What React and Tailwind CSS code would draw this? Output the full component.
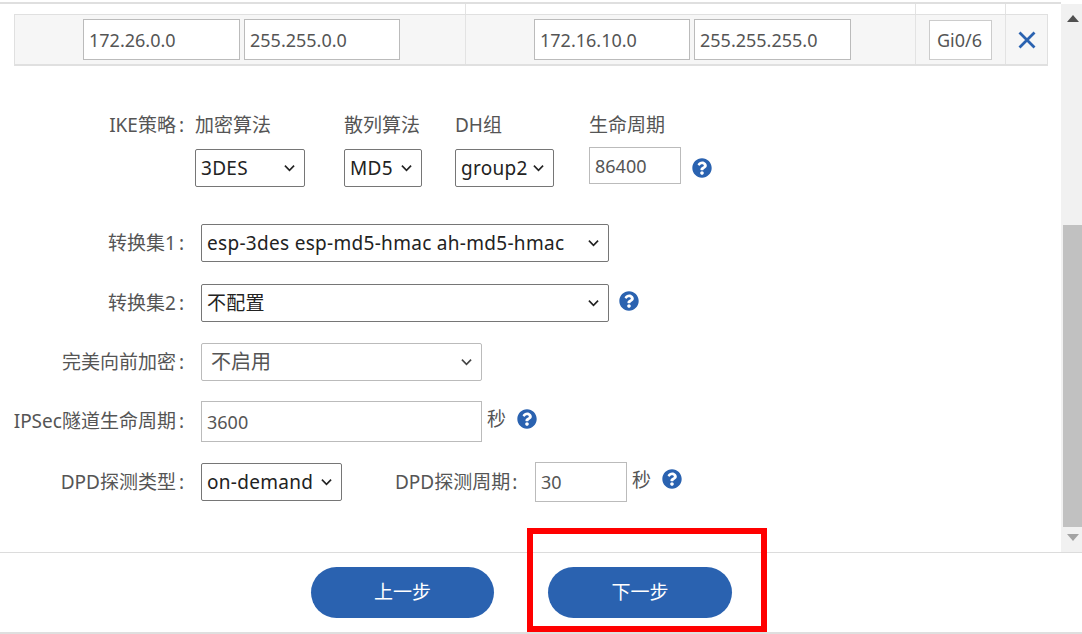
import React from 'react';
import { FaQuestionCircle } from 'react-icons/fa';

const fontClass = "font-['Noto_Sans','Noto_Sans_CJK_SC',sans-serif]";

function Help({ className = '' }) {
  return <FaQuestionCircle className={`text-[#2a62b0] text-[20px] shrink-0 ${className}`} />;
}

// native select look: dark border, small chevron on the right
function Select({ value, className = '', muted = false, options }) {
  return (
    <div className={`relative shrink-0 ${className}`}>
      <select
        defaultValue={value}
        className={`appearance-none w-full h-full bg-white rounded-[2px] border leading-normal outline-none ${
          muted
            ? 'border-[#bbbbbb] text-[#555555] pl-[9px] text-[20px]'
            : 'border-[#767676] text-[#222222] pl-[5px] text-[19px] tracking-[0.3px]'
        } ${fontClass}`}
      >
        {(options || [value]).map((o) => (
          <option key={o}>{o}</option>
        ))}
      </select>
      <svg viewBox="0 0 12 8" className="absolute right-[10px] top-1/2 -translate-y-1/2 w-[11px] h-[8px] pointer-events-none">
        <path d="M1 1.5 L6 6.5 L11 1.5" fill="none" stroke={muted ? '#444' : '#222'} strokeWidth="1.8" />
      </svg>
    </div>
  );
}

function Input({ value, className = '' }) {
  return (
    <input
      readOnly
      value={value}
      className={`shrink-0 bg-white border border-[#bbbbbb] text-[18px] text-[#555555] pl-[5px] outline-none ${fontClass} ${className}`}
    />
  );
}

function Label({ children }) {
  return (
    <div className="w-[186px] shrink-0 text-right text-[19px] text-[#555555] whitespace-nowrap">
      {children}
      <span className="ml-[3px] mr-[2px]">:</span>
    </div>
  );
}

function Row({ label, className = '', children }) {
  return (
    <div className={`flex items-center ${className}`}>
      <Label>{label}</Label>
      <div className="w-[15px] shrink-0" />
      {children}
    </div>
  );
}

function RouteTable() {
  return (
    <div className="flex-none">
      <div className="h-[2px]" />
      <div className="h-[2px] bg-[#dfdfdf]" />
      <div className="ml-[14px] w-[1034px] flex flex-col">
        <div className="h-[10px] flex border-b-0">
          <div className="w-[452px] border-r border-[#e3e3e3]" />
          <div className="w-[450px] border-r border-[#e3e3e3]" />
          <div className="w-[90px] border-r border-[#e3e3e3]" />
        </div>
        <div className="h-[52px] flex bg-[#f6f6f6] border-t border-x border-b-2 border-[#e0e0e0]">
          <div className="w-[451px] border-r border-[#e3e3e3] flex items-center pl-[68px] gap-[4px]">
            <Input value="172.26.0.0" className="w-[157px] h-[41px]" />
            <Input value="255.255.0.0" className="w-[156px] h-[41px]" />
          </div>
          <div className="w-[450px] border-r border-[#e3e3e3] flex items-center pl-[68px] gap-[4px]">
            <Input value="172.16.10.0" className="w-[156px] h-[41px]" />
            <Input value="255.255.255.0" className="w-[157px] h-[41px]" />
          </div>
          <div className="w-[90px] border-r border-[#e3e3e3] flex items-center pl-[13px]">
            <Input value="Gi0/6" className="w-[63px] h-[40px] border-[#cccccc] text-[#444444] pl-[7px]" />
          </div>
          <div className="flex-1 flex items-center justify-center">
            <svg viewBox="0 0 18 18" className="w-[18px] h-[18px]">
              <path d="M1.5 1.5 L16.5 16.5 M16.5 1.5 L1.5 16.5" stroke="#2a62b0" strokeWidth="2.8" fill="none" />
            </svg>
          </div>
        </div>
      </div>
    </div>
  );
}

function IkeRow() {
  const head = 'h-[26px] leading-[26px] text-[19px] text-[#555555] whitespace-nowrap';
  return (
    <div className="flex mt-[46px] h-[76px]">
      <div className="w-[186px] shrink-0 text-right text-[19px] text-[#555555] leading-[26px] whitespace-nowrap">
        IKE策略<span className="ml-[3px] mr-[2px]">:</span>
      </div>
      <div className="w-[9px] shrink-0" />
      <div className="w-[110px] shrink-0">
        <div className={head}>加密算法</div>
        <Select value="3DES" className="w-[110px] h-[38px] mt-[11px]" />
      </div>
      <div className="w-[78px] shrink-0 ml-[39px]">
        <div className={head}>散列算法</div>
        <Select value="MD5" className="w-[78px] h-[38px] mt-[11px]" />
      </div>
      <div className="w-[99px] shrink-0 ml-[33px]">
        <div className={head}>DH组</div>
        <Select value="group2" className="w-[99px] h-[38px] mt-[11px]" />
      </div>
      <div className="shrink-0 ml-[35px]">
        <div className={head}>生命周期</div>
        <div className="flex items-center mt-[9px]">
          <Input value="86400" className="w-[92px] h-[37px]" />
          <Help className="ml-[11px] mt-[4px]" />
        </div>
      </div>
    </div>
  );
}

function Scrollbar() {
  return (
    <div className="w-[21px] ml-auto shrink-0 bg-[#f1f1f1] pl-[2px] flex flex-col mt-[4px]">
      <div className="h-[221px] flex justify-center pt-[11px]">
        <svg viewBox="0 0 12 7" className="w-[12px] h-[7px]">
          <path d="M6 0 L12 7 L0 7 Z" fill="#505050" />
        </svg>
      </div>
      <div className="h-[302px] bg-[#c1c1c1]" />
      <div className="flex-1 flex justify-center pt-[7px]">
        <svg viewBox="0 0 12 7" className="w-[12px] h-[7px]">
          <path d="M0 0 L12 0 L6 7 Z" fill="#a3a3a3" />
        </svg>
      </div>
    </div>
  );
}

export default function App() {
  return (
    <div className={`relative w-[1082px] h-[634px] overflow-hidden bg-white flex flex-col ${fontClass}`}>
      <div className="h-[552px] flex">
        <div className="w-[1061px] shrink-0">
          <RouteTable />
          <IkeRow />
          <Row label="转换集1" className="mt-[36px]">
            <Select value="esp-3des esp-md5-hmac ah-md5-hmac" className="w-[408px] h-[38px]" />
          </Row>
          <Row label="转换集2" className="mt-[22px]">
            <Select value="不配置" className="w-[408px] h-[38px]" />
            <Help className="ml-[10px] -mt-[4px]" />
          </Row>
          <Row label="完美向前加密" className="mt-[21px]">
            <Select value="不启用" muted className="w-[281px] h-[38px]" />
          </Row>
          <Row label="IPSec隧道生命周期" className="mt-[20px]">
            <Input value="3600" className="w-[281px] h-[41px]" />
            <span className="ml-[5px] text-[19px] text-[#555555] -mt-[4px]">秒</span>
            <Help className="ml-[11px] -mt-[6px]" />
          </Row>
          <Row label="DPD探测类型" className="mt-[20px]">
            <Select value="on-demand" className="w-[141px] h-[38px]" />
            <span className="ml-[53px] w-[140px] text-[19px] text-[#555555] whitespace-nowrap">
              DPD探测周期<span className="ml-[2px]">:</span>
            </span>
            <Input value="30" className="w-[92px] h-[40px]" />
            <span className="ml-[5px] text-[19px] text-[#555555] -mt-[4px]">秒</span>
            <Help className="ml-[11px] -mt-[6px]" />
          </Row>
        </div>
        <Scrollbar />
      </div>
      <div className="h-[80px] border-t border-[#dcdcdc] flex justify-start pl-[311px] pt-[14px] gap-[54px]">
        <button className="w-[183px] h-[51px] rounded-full bg-[#2a62b0] text-white text-[19px]">上一步</button>
        <button className="w-[184px] h-[51px] rounded-full bg-[#2a62b0] text-white text-[19px]">下一步</button>
      </div>
      <div className="h-[2px] bg-[#dfdfdf]" />
      {/* annotation box drawn over the screenshot */}
      <div className="absolute left-[527px] top-[528px] w-[240px] h-[104px] border-[6px] border-[#ff0000]" />
    </div>
  );
}
